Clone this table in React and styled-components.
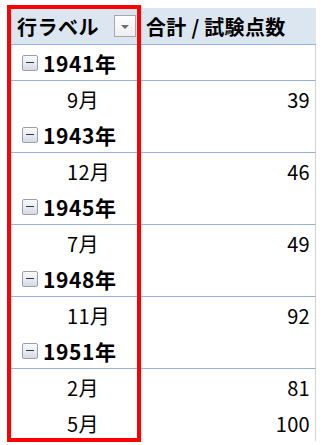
import React from "react";
import styled, { createGlobalStyle } from "styled-components";

const GlobalStyle = createGlobalStyle`
  html, body {
    margin: 0;
    padding: 0;
    background: #ffffff;
  }
  body {
    font-family: "Noto Sans CJK JP", "Noto Sans", sans-serif;
    color: #000000;
  }
`;

const Sheet = styled.div`
  position: relative;
  width: 327px;
  height: 445px;
  padding: 8px 0 0 8px;
  box-sizing: border-box;
`;

const Table = styled.div`
  width: 308px;
  display: grid;
  grid-template-columns: 132px 176px;
`;

const HeaderCell = styled.div`
  height: 36px;
  background: #dce6f1;
  border-bottom: 1px solid #95b3d7;
  display: flex;
  align-items: center;
  font-weight: 700;
  font-size: 20px;
  letter-spacing: ${(p) => (p.$first ? "0.5px" : "0.3px")};
  padding-left: ${(p) => (p.$first ? "9px" : "6px")};
  gap: 15px;
  box-sizing: content-box;
  white-space: nowrap;
`;

const FilterButton = styled.span`
  width: 20px;
  height: 20px;
  border: 1px solid #a7a7a7;
  background: linear-gradient(#ffffff, #eeeeee);
  display: flex;
  align-items: center;
  justify-content: center;

  &::after {
    content: "";
    border-left: 4px solid transparent;
    border-right: 4px solid transparent;
    border-top: 4px solid #6b6b6b;
    margin-top: 2px;
  }
`;

const Cell = styled.div`
  height: ${(p) => (p.$line ? "35px" : "36px")};
  border-bottom: ${(p) => (p.$line ? "1px solid #95b3d7" : "none")};
  border-right: ${(p) => (p.$value ? "1px solid #d4d4d4" : "none")};
  display: flex;
  align-items: center;
  justify-content: ${(p) => (p.$value ? "flex-end" : "flex-start")};
  padding-left: ${(p) => (p.$indent ? "59px" : p.$value ? "0" : "14px")};
  padding-right: ${(p) => (p.$value ? "5px" : "0")};
  font-size: ${(p) => (p.$bold ? "21px" : "20px")};
  font-weight: ${(p) => (p.$bold ? 700 : 400)};
  letter-spacing: ${(p) => (p.$bold ? "0.6px" : "0.3px")};
  gap: 5px;
  white-space: nowrap;
`;

const Collapse = styled.span`
  width: 14px;
  height: 14px;
  border: 1px solid #96a0b0;
  border-radius: 2px;
  background: linear-gradient(#fbfbfc, #d6dae1);
  display: flex;
  align-items: center;
  justify-content: center;

  &::after {
    content: "";
    width: 8px;
    height: 1px;
    background: #2c3a55;
  }
`;

const Highlight = styled.div`
  position: absolute;
  left: 7px;
  top: 5px;
  width: 134px;
  height: 437px;
  border: 4px solid #ff0000;
  box-sizing: border-box;
  pointer-events: none;
`;

const groups = [
  { year: "1941年", months: [["9月", 39]] },
  { year: "1943年", months: [["12月", 46]] },
  { year: "1945年", months: [["7月", 49]] },
  { year: "1948年", months: [["11月", 92]] },
  { year: "1951年", months: [["2月", 81], ["5月", 100]] },
];

export default function App() {
  return (
    <>
      <GlobalStyle />
      <Sheet>
        <Table>
          <HeaderCell $first>
            行ラベル
            <FilterButton />
          </HeaderCell>
          <HeaderCell>合計 / 試験点数</HeaderCell>
          {groups.map((g) => (
            <React.Fragment key={g.year}>
              <Cell $line $bold>
                <Collapse />
                {g.year}
              </Cell>
              <Cell $line $value />
              {g.months.map(([m, v]) => (
                <React.Fragment key={m}>
                  <Cell $indent>{m}</Cell>
                  <Cell $value>{v}</Cell>
                </React.Fragment>
              ))}
            </React.Fragment>
          ))}
        </Table>
        <Highlight />
      </Sheet>
    </>
  );
}
